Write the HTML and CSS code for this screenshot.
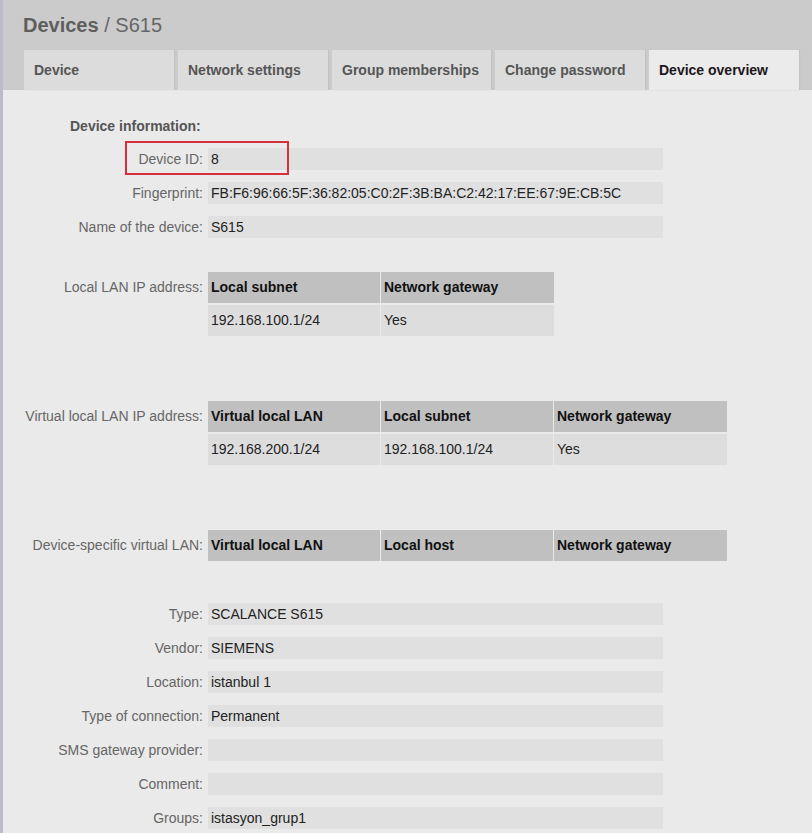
FILE: index.html
```html
<!DOCTYPE html>
<html>
<head>
<meta charset="utf-8">
<link rel="stylesheet" href="styles.css">
</head>
<body>
<div class="page">
  <div class="header">
    <h1 class="title"><b>Devices</b> / S615</h1>
    <div class="tabs">
      <div class="tab">Device</div>
      <div class="tab">Network settings</div>
      <div class="tab tab-wide">Group memberships</div>
      <div class="tab">Change password</div>
      <div class="tab active">Device overview</div>
    </div>
  </div>
  <div class="content">
    <div class="heading">Device information:</div>
    <div class="row first">
      <div class="label">Device ID:</div>
      <div class="value">8</div>
      <div class="highlight"></div>
    </div>
    <div class="row">
      <div class="label">Fingerprint:</div>
      <div class="value">FB:F6:96:66:5F:36:82:05:C0:2F:3B:BA:C2:42:17:EE:67:9E:CB:5C</div>
    </div>
    <div class="row">
      <div class="label">Name of the device:</div>
      <div class="value">S615</div>
    </div>

    <div class="row trow sec-lan">
      <div class="label tlabel">Local LAN IP address:</div>
      <div class="table cols2">
        <div class="th">Local subnet</div>
        <div class="th">Network gateway</div>
        <div class="td">192.168.100.1/24</div>
        <div class="td">Yes</div>
      </div>
    </div>

    <div class="row trow sec-vlan">
      <div class="label tlabel">Virtual local LAN IP address:</div>
      <div class="table cols3">
        <div class="th">Virtual local LAN</div>
        <div class="th">Local subnet</div>
        <div class="th">Network gateway</div>
        <div class="td">192.168.200.1/24</div>
        <div class="td">192.168.100.1/24</div>
        <div class="td">Yes</div>
      </div>
    </div>

    <div class="row trow sec-dvlan">
      <div class="label tlabel">Device-specific virtual LAN:</div>
      <div class="table cols3">
        <div class="th">Virtual local LAN</div>
        <div class="th">Local host</div>
        <div class="th">Network gateway</div>
      </div>
    </div>

    <div class="row sec-type">
      <div class="label">Type:</div>
      <div class="value">SCALANCE S615</div>
    </div>
    <div class="row">
      <div class="label">Vendor:</div>
      <div class="value">SIEMENS</div>
    </div>
    <div class="row">
      <div class="label">Location:</div>
      <div class="value">istanbul 1</div>
    </div>
    <div class="row">
      <div class="label">Type of connection:</div>
      <div class="value">Permanent</div>
    </div>
    <div class="row">
      <div class="label">SMS gateway provider:</div>
      <div class="value"></div>
    </div>
    <div class="row">
      <div class="label">Comment:</div>
      <div class="value"></div>
    </div>
    <div class="row">
      <div class="label">Groups:</div>
      <div class="value">istasyon_grup1</div>
    </div>
  </div>
</div>
</body>
</html>
```

FILE: styles.css
```css
html, body {
  margin: 0;
  padding: 0;
  height: 100%;
  overflow: hidden;
}
body {
  font-family: "Liberation Sans", Arial, sans-serif;
  font-size: 14px;
  background: #eaeaea;
}
.page {
  border-left: 3px solid #bbbbc9;
  min-height: 100%;
  box-sizing: border-box;
  background: #eaeaea;
}
.header {
  background: #cbcbcb;
  height: 90px;
  box-sizing: border-box;
  padding-top: 13px;
}
.title {
  margin: 0 0 0 20px;
  font-size: 20px;
  line-height: 24px;
  font-weight: normal;
  color: #666666;
  height: 37px;
}
.title b {
  font-weight: bold;
  color: #5e5e5e;
}
.tabs {
  display: flex;
  gap: 4px;
  margin-left: 21px;
}
.tab {
  min-width: 150px;
  box-sizing: border-box;
  height: 40px;
  line-height: 40px;
  padding: 0 10px;
  background: #dcdcdc;
  color: #555555;
  font-weight: bold;
  font-size: 14px;
  white-space: nowrap;
  box-shadow: 1px 0 1px #c2c2c2;
}
.tab-wide {
  min-width: 159px;
}
.tab.active {
  background: #ebebeb;
  color: #1c1620;
}
.content {
  padding-top: 26px;
  display: flex;
  flex-direction: column;
  gap: 12px;
}
.heading {
  margin-left: 67px;
  line-height: 20px;
  height: 20px;
  font-weight: bold;
  color: #555555;
}
.row {
  display: grid;
  grid-template-columns: 200px 455px;
  column-gap: 5px;
  position: relative;
}
.label {
  text-align: right;
  color: #666666;
  line-height: 22px;
  white-space: nowrap;
}
.value {
  background: #e0e0e0;
  height: 22px;
  line-height: 22px;
  padding-left: 3px;
  color: #222222;
  white-space: nowrap;
}
.highlight {
  position: absolute;
  left: 122px;
  top: -7px;
  width: 164px;
  height: 34px;
  box-sizing: border-box;
  border: 2px solid #d3303b;
}
.trow {
  grid-template-columns: 200px auto;
}
.tlabel {
  line-height: 31px;
}
.table {
  display: grid;
  column-gap: 1px;
  row-gap: 2px;
  justify-self: start;
}
.cols2 {
  grid-template-columns: 172px 173px;
}
.cols3 {
  grid-template-columns: 172px 172px 173px;
}
.th {
  background: #c0c0c0;
  height: 31px;
  line-height: 31px;
  padding-left: 3px;
  font-weight: bold;
  color: #111111;
  white-space: nowrap;
}
.td {
  background: #dddddd;
  height: 31px;
  line-height: 31px;
  padding-left: 3px;
  color: #222222;
  white-space: nowrap;
}
.sec-lan { margin-top: 22px; }
.sec-vlan { margin-top: 53px; }
.sec-dvlan { margin-top: 53px; }
.sec-type { margin-top: 30px; }
```
